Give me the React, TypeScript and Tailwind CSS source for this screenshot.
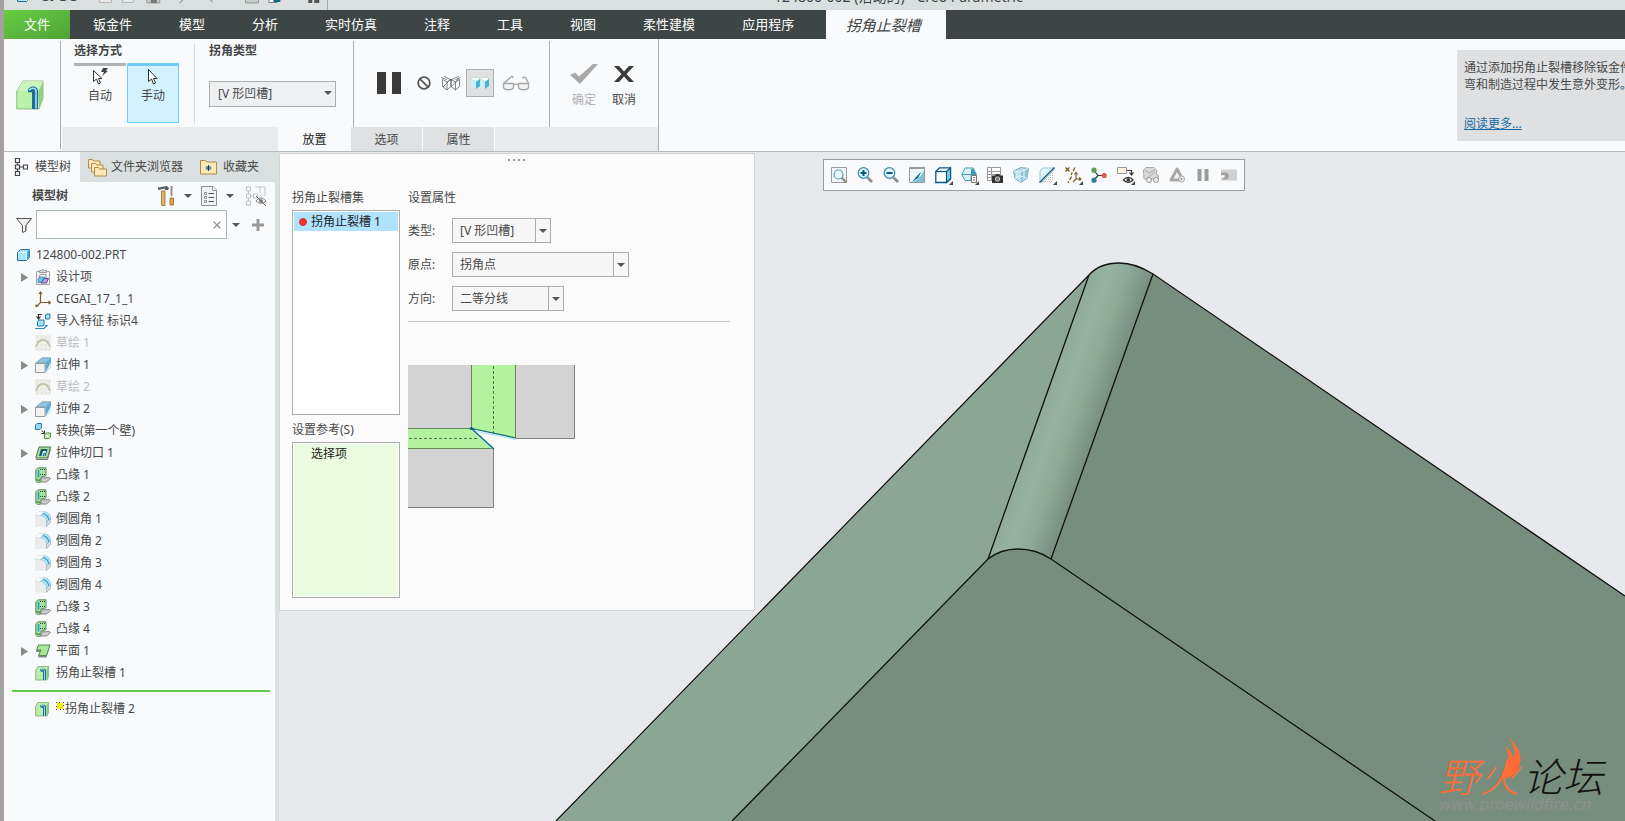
import { useState, type ReactNode } from "react";
import { Ban, X } from "lucide-react";

const menuItems = ["钣金件", "模型", "分析", "实时仿真", "注释", "工具", "视图", "柔性建模", "应用程序"];

type IconName =
  | "part"
  | "design"
  | "csys"
  | "import"
  | "sketch"
  | "extrude"
  | "convert"
  | "cut"
  | "flange"
  | "round"
  | "planar"
  | "relief";

type TreeItem = { label: string; icon: IconName; expandable?: boolean; muted?: boolean };

const treeItems: TreeItem[] = [
  { label: "设计项", icon: "design", expandable: true },
  { label: "CEGAI_17_1_1", icon: "csys" },
  { label: "导入特征 标识4", icon: "import" },
  { label: "草绘 1", icon: "sketch", muted: true },
  { label: "拉伸 1", icon: "extrude", expandable: true },
  { label: "草绘 2", icon: "sketch", muted: true },
  { label: "拉伸 2", icon: "extrude", expandable: true },
  { label: "转换(第一个壁)", icon: "convert" },
  { label: "拉伸切口 1", icon: "cut", expandable: true },
  { label: "凸缘 1", icon: "flange" },
  { label: "凸缘 2", icon: "flange" },
  { label: "倒圆角 1", icon: "round" },
  { label: "倒圆角 2", icon: "round" },
  { label: "倒圆角 3", icon: "round" },
  { label: "倒圆角 4", icon: "round" },
  { label: "凸缘 3", icon: "flange" },
  { label: "凸缘 4", icon: "flange" },
  { label: "平面 1", icon: "planar", expandable: true },
  { label: "拐角止裂槽 1", icon: "relief" },
];

const treeIcons: Record<IconName, ReactNode> = {
  part: (
    <>
      <path d="M1.5 5.500 4.500 2.500h9v8l-3 3h-9z" fill="#a8e6fb" stroke="#2b6f8f" />
      <path d="M10.500 5.500l3-3v8l-3 3z" fill="#38a8d8" />
      <path d="M2 5.500h8.500v7.500" fill="none" stroke="#e2f8ff" />
    </>
  ),
  design: (
    <>
      <path d="M1.500 2.500h13v13h-13z" fill="#f2f2f2" stroke="#a5a5a5" />
      <path d="M4.500 3.500v-2h2l1.500-1 1.500 1h2v2z" fill="#ddd" stroke="#999" />
      <path d="M5 5.500h6v4H4z" fill="#fff" stroke="#999" />
      <path d="M3 10l2-2h5v4l-2 1.500H3z" fill="#5fc3e8" stroke="#357f9f" strokeWidth=".7" />
      <path d="M6 14l3-4.500h4.500l-2 4.500z" fill="#b9a0e0" stroke="#69489c" />
    </>
  ),
  csys: (
    <g fill="none" stroke="#7a6030" strokeWidth="1.200">
      <path d="M5.500 2v9.500H15M5.500 11.500L1 16M4 3 5.500 1 7 3M13.500 10l2 1.500-2 1.500M1 13.500V16h2.500" />
    </g>
  ),
  import: (
    <>
      <path d="M7 1.500H3.500v4M1.500 3.500l2 2.500 2-2.500" fill="none" stroke="#333" strokeWidth="1.200" />
      <path d="M10.500 2l1-1H15v4l-1 1h-3.500z" fill="#9de0f8" stroke="#2a7ba0" />
      <path d="M2.500 8.500 4 7h5v5l-1 1H2.500z" fill="#9de0f8" stroke="#2a7ba0" />
      <path d="M0 15.500h9l3-3h-2" fill="none" stroke="#2a90bd" strokeWidth="1.200" />
    </>
  ),
  sketch: (
    <>
      <path d="M0 0h16v16H0z" fill="#eeeeea" />
      <path d="M2 2h13M2 6h13M2 10h13M2 14h13" stroke="#d3cbbb" strokeDasharray="1 3" />
      <path d="M1 12C4 2.500 12 2.500 15 12" fill="none" stroke="#c4c0a8" strokeWidth="1.600" />
      <path d="M2 7l4-2M10 5l4 2" stroke="#c4c0a8" />
    </>
  ),
  extrude: (
    <>
      <path d="M1 6 7 .8h9l-5.500 5.200z" fill="#8cc7e2" stroke="#6795a8" strokeWidth=".7" />
      <path d="M10.500 6 16 1v9l-5.500 5.500z" fill="#5fa9cc" />
      <path d="M10.500 15.500 16 10v-5z" fill="#d5f1fb" />
      <path d="M.5 6.500h9.500v9H.5z" fill="#f2f2f2" stroke="#9a9a9a" />
    </>
  ),
  convert: (
    <>
      <path d="M.5 2 2 .5h4.500V5L5 6.500H.5z" fill="#8fdaf6" stroke="#2a7ba0" />
      <path d="M6.500 7.500 9.500 10M9.500 7.500v3h-3" stroke="#333" fill="none" />
      <path d="M9.500 11.500 11.500 10h4v4l-1.500 1.500H9.500z" fill="#b9eba7" stroke="#4f8e43" />
      <path d="M11 12h2v2h-2z" fill="#fff" />
    </>
  ),
  cut: (
    <>
      <path d="M.8 13 4 2h11.500l-3 11z" fill="#a9df9e" stroke="#48764a" />
      <path d="M1 14.500h11.500L15.500 4" fill="none" stroke="#777" />
      <path d="M4 11 6 4h6.500l-2 7z" fill="#0f5779" />
      <path d="M6.500 11 8 6h3l-1.500 5z" fill="#e8f8ff" />
      <path d="M7.500 11 8.500 8H10l-.8 3z" fill="#1878a5" />
    </>
  ),
  flange: (
    <>
      <path d="M5 11l9-.5 1.500 1-4 3.500H4z" fill="#c9cccb" stroke="#888" />
      <path d="M.8 4C1 2 2 1.300 4 .8h7v8L6 10v4.500l-2.500 1c-2 0-2.700-1-2.700-2.500z" fill="#a7df9c" stroke="#5c8e5c" />
      <path d="M3.500 3v7.500" stroke="#22a0cc" strokeWidth="1.600" />
      <path d="M5 2.500h5.500M5 7.500h5.500" stroke="#245" strokeDasharray="1 1" />
      <path d="M1.500 12c1 2 3 1.500 4 .5" fill="none" stroke="#547a54" strokeWidth="1.200" />
    </>
  ),
  round: (
    <>
      <path d="M0 5h6c4 1 5 4 5 11H0z" fill="#ebebeb" />
      <path d="M0 4.500 4 .5h5L6 4.500z" fill="#fff" stroke="#c9d2d6" strokeWidth=".6" />
      <path d="M5.500 4.500 9.500.8c3.500.5 6 3 6.200 6.500L11.500 11C11 7 9 5 5.500 4.500z" fill="#aee4f8" stroke="#8fbfd4" strokeWidth=".7" />
      <path d="M11.500 11l4.300-3.500V11l-4.300 4.500z" fill="#d6dcde" stroke="#8caebc" strokeWidth=".7" />
      <path d="M8 2.500C11.500 3.500 13.500 6 13.800 9" fill="none" stroke="#3a9cc8" strokeWidth="1.200" />
    </>
  ),
  planar: (
    <>
      <path d="M3 14.500 5 9H1L3.500 2.500H15l-3.500 12z" fill="#898989" />
      <path d="M3.500 12.500 6 7H1.500L3.500 2H15l-3.500 10.500z" fill="#a9e89b" stroke="#568b51" />
    </>
  ),
  relief: (
    <>
      <path d="M.7 15V5L3 1.500h10.500v10L12 15z" fill="#b8edaa" stroke="#8fb88c" />
      <path d="M11.500 15V5l2-3.500v10z" fill="#88c97f" />
      <path d="M5 5.500C5 3 11 3 11 5.500V15H8V6.800H6z" fill="#1e6f98" />
      <path d="M6.300 5.200C7 4.300 9 4.300 9.500 5.500V15" fill="none" stroke="#8fd6f5" />
    </>
  ),
};

function TreeIcon({ name }: { name: IconName }) {
  return (
    <svg viewBox="0 0 16 16" className="h-4 w-4 shrink-0" aria-hidden="true">
      {treeIcons[name]}
    </svg>
  );
}

const lens = (
  <>
    <path d="M10.500 10.500 15 15" stroke="#8b8b8b" strokeWidth="2.600" />
    <circle cx="6.500" cy="6" r="5.300" fill="#dff4fc" stroke="#3d8bab" strokeWidth="1.200" />
  </>
);

const corner = <path d="M18 14v4h-4z" fill="#444" />;

const viewTools: { label: string; icon: ReactNode }[] = [
  {
    label: "重新调整",
    icon: (
      <>
        <path d="M.5.5h15v15H.5z" fill="#f4f8fa" stroke="#9a9a9a" />
        <path d="M10 10l5.500 5.500" stroke="#8b8b8b" strokeWidth="2.400" />
        <circle cx="7.500" cy="7.500" r="4.500" fill="#eefaff" stroke="#4f9ab8" strokeWidth="1.200" />
      </>
    ),
  },
  { label: "放大", icon: <>{lens}<path d="M3.500 6h6M6.500 3v6" stroke="#075a80" strokeWidth="2" /></> },
  { label: "缩小", icon: <>{lens}<path d="M3.500 6h6" stroke="#075a80" strokeWidth="2" /></> },
  {
    label: "重画",
    icon: (
      <>
        <path d="M.5.5h15v15H.5z" fill="#eef7fa" stroke="#999" />
        <path d="M15 3v12H3C9 13 12 9 15 3z" fill="#7cc2d9" />
        <path d="M3 15 7 10l5.500-5.500L9 11z" fill="#11658b" />
        <path d="M.5 1h15" stroke="#999" strokeWidth="2" />
      </>
    ),
  },
  {
    label: "显示样式",
    icon: (
      <>
        <path d="M.8 4.500 4.500.8h11v11l-4 3.700H.8z" fill="#fff" stroke="#075a80" strokeWidth="1.300" />
        <path d="M11.500 4.500l4-3.700v11l-4 3.700z" fill="#86cbe6" stroke="#075a80" strokeWidth="1.200" />
        <path d="M.8 4.500h10.700" stroke="#075a80" strokeWidth="1.300" />
        {corner}
      </>
    ),
  },
  {
    label: "已保存方向",
    icon: (
      <>
        <path d="M.8 7.500 4 1h8l3.500 6.500-3.500 6H4z" fill="#d8f3fc" stroke="#4f9ab8" />
        <path d="M10 8V3l2-2 3.500 7z" fill="#3d99bd" />
        <path d="M1 7.500h9v6" stroke="#4f9ab8" fill="none" />
        <path d="M10.500 8.500h5v7h-5z" fill="#fff" stroke="#777" />
        <path d="M12 10.500h2M12 13h2" stroke="#777" />
        {corner}
      </>
    ),
  },
  {
    label: "视图管理器",
    icon: (
      <>
        <path d="M.5.5h13v13H.5zM.5 4.500h13M.5 7.500h13M.5 10.500h13M4.500 1v12" fill="#fff" stroke="#999" />
        <path d="M5 8.500h3l1-1.500h3l1 1.500h3V16H5z" fill="#333" />
        <circle cx="10.500" cy="12" r="2.200" fill="#777" stroke="#ccc" />
      </>
    ),
  },
  {
    label: "透视图",
    icon: (
      <>
        <path d="M.5 4 8 .5l7.500 1-1.500 10-6 4-6-4z" fill="#b9dcea" stroke="#79a9bc" />
        <path d="M7 5 15.500 1.500 14 11.500l-7 4z" fill="#8dc4da" />
        <path d="M.5 4 7 5l8-3.500M7 5v10M11 3.500v10M4 4.500v8M2 11l5-2 7 2" fill="none" stroke="#e6f5fa" />
      </>
    ),
  },
  {
    label: "截面",
    icon: (
      <>
        <path d="M1 4 4 1h11v2L3 15H1z" fill="#e0f5fc" stroke="#9cc8d8" />
        <path d="M.5 15.500 15.500.5" stroke="#12597a" strokeWidth="1.200" />
        <path d="M4 14.500h10M7 12.500h7M9 10.500h5M11 8.500h4M13 6.500h2" stroke="#bbb" strokeDasharray="1 1" />
        {corner}
      </>
    ),
  },
  {
    label: "基准显示",
    icon: (
      <>
        <path d="M.5.500l4 4m0-4-4 4" stroke="#7a5c22" strokeWidth="1.300" />
        <path d="M10 .5 6 8M6.500 9.500 3 16" fill="none" stroke="#7a5c22" strokeWidth="1.300" strokeDasharray="4 1.500" />
        <path d="M11 6v6h4.500M11 12l-3 3M9.500 7.500 11 5.500l1.500 2M14 10.500l2 1.500-2 1.500" fill="none" stroke="#7a5c22" strokeWidth="1.100" />
        {corner}
      </>
    ),
  },
  {
    label: "注释显示",
    icon: (
      <>
        <path d="M3 3.500 7 8.500 3 13M7 8.500h6" fill="none" stroke="#333" strokeWidth="1.200" />
        <circle cx="3" cy="3.200" r="2.600" fill="#5aa05a" />
        <circle cx="13.200" cy="8.500" r="2.600" fill="#dd5a50" />
        <circle cx="3" cy="13.200" r="2.600" fill="#2c7fa6" />
      </>
    ),
  },
  {
    label: "旋转中心",
    icon: (
      <>
        <path d="M.5.5h9v6h-9z" fill="#fff5dc" stroke="#999" />
        <path d="M10 3.500h4.500v4M12.500 5.500l2 2.500 2-2.500" fill="none" stroke="#333" strokeWidth="1.200" />
        <path d="M6.500 13c2.500-3.500 7-3.500 9.500 0-2.500 3-7 3-9.500 0z" fill="#fff" stroke="#333" strokeWidth="1.300" />
        <circle cx="11.200" cy="12.800" r="1.800" fill="#333" />
        {corner}
      </>
    ),
  },
  {
    label: "外观",
    icon: (
      <>
        <path d="M.5 3 3 .5h8l3 3-1 3 2.500 2V12H1z" fill="#d9d9d9" stroke="#aaa" />
        <path d="M2 3l4 3 6-3M4 11l8-6" stroke="#aaa" fill="none" />
        <circle cx="6" cy="13" r="2.500" fill="#eee" stroke="#999" />
        <circle cx="13" cy="13" r="2.500" fill="#eee" stroke="#999" />
      </>
    ),
  },
  {
    label: "仿真",
    icon: (
      <>
        <path d="M8 2 14 13H2z" fill="#f3f3f3" stroke="#a8a8a8" strokeWidth="3" strokeLinejoin="round" />
        <circle cx="12.500" cy="12" r="3" fill="#eee" stroke="#aaa" />
        <path d="M11.700 10.500v3l2-1.500z" fill="#888" />
      </>
    ),
  },
  { label: "暂停", icon: <path d="M2.500 2h4v12h-4zM9.500 2h4v12h-4z" fill="#9b9b9b" /> },
  {
    label: "停止",
    icon: (
      <>
        <path d="M0 2.500h16v11H0z" fill="#cfcfcf" />
        <path d="M0 5.500h4c5 0 5 7 0 7H2v-2h2V8H0z" fill="#a0a0a0" />
        <path d="M0 8.500h3v2H0z" fill="#f8fafc" />
      </>
    ),
  },
];

function Caret() {
  return (
    <svg viewBox="0 0 8 4" className="h-1 w-2 shrink-0" aria-hidden="true">
      <path d="M0 0h8L4 4z" fill="#555" />
    </svg>
  );
}

function Field({ id, label, value, width }: { id: string; label: string; value: string; width: string }) {
  return (
    <div className="flex h-[25px] items-center">
      <label htmlFor={id} className="w-11">
        {label}
      </label>
      <div className={`relative h-full ${width}`}>
        <select
          id={id}
          className="h-full w-full appearance-none border border-[#adadad] bg-[#f7f7f7] pl-[7px] text-[12px] leading-4 outline-none"
        >
          <option>{value}</option>
        </select>
        <span className="pointer-events-none absolute inset-y-0 right-0 flex w-4 items-center border-l border-[#adadad] pl-[3px]">
          <Caret />
        </span>
      </div>
    </div>
  );
}

function TitleBar() {
  return (
    <header className="flex h-[10px] items-end overflow-hidden bg-[#dae0df] text-[#444]">
      <div className="flex h-7 w-[324px] shrink-0 items-end border-r border-[#a3a9a9] pb-1.5">
        <svg viewBox="0 0 16 16" className="ml-3 h-4 w-4 shrink-0" aria-hidden="true">
          {treeIcons.part}
        </svg>
        <span className="ml-2 w-[58px] text-[18px] leading-5 font-bold">creo</span>
        <svg viewBox="0 0 230 16" className="h-4 w-[230px]" aria-hidden="true">
          <path d="M1.500 1.500h12v13h-12zM24 14.500l4-8h11l-4 8z" fill="#e8e8e8" stroke="#b5b5b5" />
          <path d="M49 2h13v13H49zM148 2h13v13h-13z" fill="#c5c9c8" stroke="#999" />
          <path d="M53 10h6v5h-6z" fill="#777" />
          <path d="M82 15l4-4M115 14l-4-4" stroke="#777" />
          <path d="M171.500 10.500h8v4h-8z" fill="#fff" stroke="#777" />
          <path d="M176 8h7v6h-7z" fill="#15658c" />
          <path d="M211 12h4v3h-4zM217 12h5v3h-5z" fill="#555" />
        </svg>
      </div>
      <p className="mb-1 ml-[446px] text-[14px] leading-[18px] whitespace-nowrap">
        124800-002 (活动的) - Creo Parametric
      </p>
    </header>
  );
}

function MenuBar() {
  return (
    <nav className="flex h-[29px] bg-[#3d4545] text-[13px] leading-4 text-white">
      <button type="button" className="w-[66px] bg-linear-to-br from-[#67cd43] to-[#4fa336] pb-0.5">
        文件
      </button>
      <div className="flex gap-[47px] pr-8 pb-0.5 pl-[23px]">
        {menuItems.map((item) => (
          <button key={item} type="button">
            {item}
          </button>
        ))}
      </div>
      <button type="button" className="w-[120px] bg-[#f8fafc] pr-1.5 text-[15px] text-[#444] italic">
        拐角止裂槽
      </button>
    </nav>
  );
}

function Ribbon() {
  const [mode, setMode] = useState("手动");
  const [tab, setTab] = useState("放置");

  return (
    <section className="flex h-[113px] border-b border-[#b3bcbc] bg-[#f8fafc]">
      <div className="my-0.5 flex w-[57px] items-center border-r border-[#aaafb0] pl-3">
        <svg viewBox="0 0 28 30" className="h-[30px] w-7" aria-hidden="true">
          <path d="M.8 29V11L7 1h20v17l-4 11z" fill="#b9f3a9" stroke="#8fba8b" />
          <path d="M1 11 7 1h20l-5 10z" fill="#c9f4c0" />
          <path d="M22 12 27 2v16l-4 11z" fill="#8fce8b" />
          <path d="M12 11C12 5 22 5 22 11v18h-6V12z" fill="#1c6c94" />
          <path d="M13.500 10.500c1-3 6-3 6.500 0v18" fill="none" stroke="#a3e2fb" strokeWidth="1.600" />
          <path d="M12 11.500h4.500v-2" fill="none" stroke="#1c6c94" strokeWidth="1.400" />
        </svg>
      </div>

      <div className="mr-px flex w-[598px] flex-col border-r border-[#aaafb0]">
        <div className="flex h-[88px] pt-0.5">
          <div className="my-[3px] w-[134px] border-r border-[#d5d8da] pl-[13px]">
            <h2 className="h-[19px] text-[12px] leading-[13px] font-bold text-[#444]">选择方式</h2>
            <div className="flex gap-px">
              <button
                type="button"
                onClick={() => setMode("自动")}
                className="flex h-[60px] w-[52px] flex-col items-center border-t-3 border-[#b0b2b3] pt-0.5"
              >
                <svg viewBox="0 0 18 17" className="h-[17px] w-[18px]" aria-hidden="true">
                  <path d="M2.500 2.500v11l3-2.500 2 5 2-1-2-4.500h3.500z" fill="#fff" stroke="#333" />
                  <path d="M12 0h5l-2 3h2l-6 5 2-4h-3z" fill="#444" />
                </svg>
                <span className="mt-[3px] text-[12px] leading-4">自动</span>
              </button>
              <button
                type="button"
                onClick={() => setMode("手动")}
                aria-pressed={mode === "手动"}
                className="flex h-[60px] w-[52px] flex-col items-center border border-t-3 border-[#73cdfb] bg-[#d2f2ff] pt-0.5"
              >
                <svg viewBox="0 0 16 17" className="h-[17px] w-4" aria-hidden="true">
                  <path d="M3.500 1.500v12l3-2.500 2 5 2-1-2-4.500h3.500z" fill="#fff" stroke="#333" />
                </svg>
                <span className="mt-[3px] text-[12px] leading-4">手动</span>
              </button>
            </div>
          </div>

          <div className="w-[159px] border-r border-[#aaafb0] pt-[3px] pl-[14px]">
            <label htmlFor="corner-type" className="block h-9 text-[12px] leading-[13px] font-bold text-[#444]">
              拐角类型
            </label>
            <div className="relative h-[26px] w-[127px]">
              <select
                id="corner-type"
                className="h-full w-full appearance-none border border-[#adadad] bg-[#eef1f2] pl-2 text-[12px] leading-4 outline-none"
              >
                <option>[V 形凹槽]</option>
              </select>
              <span className="pointer-events-none absolute inset-y-0 right-1 flex items-center">
                <Caret />
              </span>
            </div>
          </div>

          <div className="flex w-[196px] items-center border-r border-[#aaafb0] pb-0.5 pl-[23px]">
            <button type="button" aria-label="暂停" className="flex gap-1.5">
              <span className="h-[22px] w-[9px] bg-[#3a3a3a]" />
              <span className="h-[22px] w-[9px] bg-[#3a3a3a]" />
            </button>
            <button type="button" aria-label="无预览" className="ml-4">
              <Ban size={14} strokeWidth={3} className="text-[#555]" />
            </button>
            <button type="button" aria-label="分离" className="ml-2.5">
              <svg viewBox="0 0 20 16" className="h-4 w-5" aria-hidden="true">
                <path
                  d="M1.500 4.500 6 7l4-2.500v7L6 15l-4.500-3.500zM6 7v8M10 4.500 14.500 7l4-2.500v7l-4 3.500-4.500-3.500zM14.500 7v8M0 2.500l6 2M3 1l7 4M18 1l-8 4M19.500 2.500l-5 2M2 12l8-8M10 12l8-9"
                  fill="none"
                  stroke="#555"
                  strokeWidth=".7"
                />
              </svg>
            </button>
            <button
              type="button"
              aria-label="连接"
              className="ml-[5px] flex h-7 w-7 items-center justify-center border border-[#adadad] bg-[#e0e1e3]"
            >
              <svg viewBox="0 0 18 14" className="h-[14px] w-[18px]" aria-hidden="true">
                <path d="M0 3l5 2.500V13L0 9.500zM9 3l5 2.500V13L9 9.500z" fill="#c9effc" />
                <path d="M5 5.500 9 2.500v7.500l-4 3zM14 5.500l4-3v7.500l-4 3z" fill="#45b1dd" />
                <path d="M0 3 2 1.500h5L9 3 5 5.500zM9 3l2-1.500h5L18 3l-4 2.500z" fill="#fff" stroke="#8ca" strokeWidth=".4" />
              </svg>
            </button>
            <button type="button" aria-label="预览" className="ml-2">
              <svg viewBox="0 0 28 16" className="h-4 w-7" aria-hidden="true">
                <path
                  d="M1.500 8.500h10v4c-1 3-9 3-10 0zM16.500 8.500h10v4c-1 3-9 3-10 0zM11.500 10c1.500-1 3.500-1 5 0M1.500 8.500 9 2c1-1 2-.5 2 1M26.500 8.500 24 3c-1-1.500-3-1-3.500.5"
                  fill="#eee"
                  fillOpacity=".6"
                  stroke="#a5a5a5"
                  strokeWidth="1.300"
                />
              </svg>
            </button>
          </div>

          <div className="flex items-start gap-3 pt-[22px] pl-5 text-[12px] leading-4">
            <button type="button" className="flex w-7 flex-col items-center text-[#b0b0b0]">
              <svg viewBox="0 0 28 22" className="h-[22px] w-7" aria-hidden="true">
                <path d="M0 12l5-2.500 4 4L23 1h5L10 21z" fill="#a9a9a9" />
              </svg>
              <span className="mt-[7px] whitespace-nowrap">确定</span>
            </button>
            <button type="button" className="flex w-7 flex-col items-center">
              <svg viewBox="0 0 20 22" className="h-[22px] w-5" aria-hidden="true">
                <path d="M0 3h5l5 5.500L15 3h5l-7.500 8 7.500 8h-5l-5-5.500L5 19H0l7.500-8z" fill="#3a3a3a" />
              </svg>
              <span className="mt-[7px] whitespace-nowrap">取消</span>
            </button>
          </div>
        </div>

        <div className="ml-px flex h-6 gap-px bg-[#f8fafc] text-[12px] leading-4" role="tablist">
          <span className="w-[216px] bg-[#e9ebec]" />
          {["放置", "选项", "属性"].map((name) => (
            <button
              key={name}
              type="button"
              role="tab"
              aria-selected={tab === name}
              onClick={() => setTab(name)}
              className={`w-[71px] pt-0.5 ${tab === name ? "bg-[#f8fafc] text-[#222]" : "bg-[#dfe1e3]"}`}
            >
              {name}
            </button>
          ))}
          <span className="flex-1 bg-[#e9ebec]" />
        </div>
      </div>

      <aside className="mt-[11px] ml-auto h-[91px] w-[168px] overflow-hidden bg-[#dfe0e2] pt-[9px] pl-[7px] text-[12px] leading-[17px] whitespace-nowrap">
        <p>
          通过添加拐角止裂槽移除钣金件
          <br />
          弯和制造过程中发生意外变形。
        </p>
        <a href="#help" className="mt-[22px] block text-[#1769a6] underline">
          阅读更多...
        </a>
      </aside>
    </section>
  );
}

function ModelTree() {
  return (
    <aside className="flex w-[275px] shrink-0 flex-col border-r-4 border-[#dae0df] bg-[#f8fafc] text-[12px] leading-4">
      <div className="flex h-[30px] bg-[#dae0df]" role="tablist">
        <button type="button" role="tab" aria-selected="true" className="flex w-19 items-center bg-[#f8fafc] pl-2.5">
          <svg viewBox="0 0 14 18" className="mr-[7px] h-[18px] w-[14px]" aria-hidden="true">
            <path
              d="M1.500.5h4v4h-4zM1.500 7h4v4h-4zM1.500 13.500h4v4h-4zM9.500 7h4v4h-4zM3.500 4.500V7M3.500 11v2.500M5.500 9h4"
              fill="none"
              stroke="#444"
              strokeWidth="1.200"
            />
          </svg>
          模型树
        </button>
        <button type="button" role="tab" aria-selected="false" className="flex items-center pl-2">
          <svg viewBox="0 0 19 19" className="mr-1 h-[19px] w-[19px]" aria-hidden="true">
            <g fill="#ffe9b8" stroke="#b08a4a">
              <path d="M.5 10V1.500h4L5.500 3H12v7z" />
              <path d="M3.500 14V5.500h4L8.500 7H15v7z" />
              <path d="M6.500 18V9.500h4l1 1.500h7v7z" />
            </g>
          </svg>
          文件夹浏览器
        </button>
        <button type="button" role="tab" aria-selected="false" className="flex items-center pl-[17px]">
          <svg viewBox="0 0 17 16" className="mr-1.5 h-4 w-[17px]" aria-hidden="true">
            <path d="M.5 15V1.500h5L7 3h9.500v12z" fill="#ffe9b8" stroke="#b08a4a" />
            <path d="M8.500 6v6M5.500 9h6M6.500 7l4 4M10.500 7l-4 4" stroke="#15557a" />
          </svg>
          收藏夹
        </button>
      </div>

      <div className="flex h-7 items-center pr-2 pl-7">
        <h2 className="font-bold">模型树</h2>
        <button type="button" aria-label="设置" className="ml-auto flex items-center gap-[9px]">
          <svg viewBox="0 0 17 20" className="h-5 w-[17px]" aria-hidden="true">
            <path d="M0 4V1.500L9 0l2 2-1 2H7V2.500z" fill="#555b66" />
            <path d="M3.500 5h3.500v14.500H3.500z" fill="#e4b468" stroke="#8c6a35" strokeWidth=".8" />
            <path d="M13.500 0v10" stroke="#888" strokeWidth="1.800" />
            <path d="M12 12h3.500v7H12z" fill="#e4a848" stroke="#8c6a35" strokeWidth=".8" />
          </svg>
          <Caret />
        </button>
        <button type="button" aria-label="显示" className="ml-[9px] flex items-center gap-[9px]">
          <svg viewBox="0 0 16 20" className="h-5 w-4" aria-hidden="true">
            <path d="M.5.5H12L15.500 4v15.500H.5z" fill="#eef4f7" stroke="#8a8f92" />
            <path d="M11.500.5v4h4" fill="#fff" stroke="#8a8f92" />
            <path d="M7.500 7.500H13M7.500 11.500H13M7.500 15.500H13" stroke="#555" />
            <path d="M3.500 6.500h2v2h-2zM3.500 10.500h2v2h-2zM3.500 14.500h2v2h-2z" fill="#fff" stroke="#777" strokeWidth=".8" />
          </svg>
          <Caret />
        </button>
        <button type="button" aria-label="隐藏" className="ml-3">
          <svg viewBox="0 0 21 20" className="h-5 w-[21px]" aria-hidden="true">
            <path
              d="M.5 1h4v4h-4zM.5 8h4v4h-4zM.5 15h4v4h-4zM7.500 8h4v4h-4zM4.500 10h3M2.500 5v3M2.500 12v3M9 1h10v9M14 1v6"
              fill="none"
              stroke="#bfc1c2"
            />
            <path d="M10 15c3-4 7-4 10 0-3 3-7 3-10 0z" fill="#eee" stroke="#888" />
            <circle cx="15" cy="15" r="2" fill="#888" />
            <path d="M10 10l10 10" stroke="#666" />
          </svg>
        </button>
      </div>

      <div className="flex h-[29px] items-center pl-3">
        <svg viewBox="0 0 16 16" className="mr-1 h-4 w-4" aria-hidden="true">
          <path d="M.5 1.500h15L10 8.500V14l-3.500 1.500v-7z" fill="#f2f2f2" stroke="#555" />
          <path d="M9 9l5-7h1.500L10 8.500V14l-1 .5z" fill="#777" />
        </svg>
        <div className="relative h-full w-[191px]">
          <input
            type="text"
            aria-label="搜索模型树"
            className="h-full w-full border border-[#a9b5b5] bg-white pr-6 pl-1 outline-none"
          />
          <button type="button" aria-label="清除" className="absolute inset-y-0 right-1">
            <X size={12} strokeWidth={3} className="text-[#999]" />
          </button>
        </div>
        <button type="button" aria-label="搜索选项" className="ml-[5px]">
          <Caret />
        </button>
        <button type="button" aria-label="添加" className="ml-3">
          <svg viewBox="0 0 12 12" className="h-3 w-3" aria-hidden="true">
            <path d="M4.500 0h3v4.500H12v3H7.500V12h-3V7.500H0v-3h4.500z" fill="#999" />
          </svg>
        </button>
      </div>

      <div className="mt-[5px] flex h-[22px] items-center gap-1 pl-3">
        <TreeIcon name="part" />
        124800-002.PRT
      </div>
      <ul>
        {treeItems.map((item) => (
          <li key={item.label} className="flex h-[22px] items-center pl-[17px]">
            <span className="w-[14px]">
              {item.expandable && (
                <svg viewBox="0 0 7 9" className="h-[9px] w-[7px]" aria-hidden="true">
                  <path d="M0 0l7 4.500L0 9z" fill="#8a8a8a" />
                </svg>
              )}
            </span>
            <TreeIcon name={item.icon} />
            <span className={`ml-[5px] ${item.muted ? "text-[#bcbcbc]" : ""}`}>{item.label}</span>
          </li>
        ))}
      </ul>
      <div className="mt-1.5 mr-[5px] mb-1.5 ml-2 h-0.5 bg-[#62cb45]" />
      <div className="flex h-[22px] items-center pl-[31px]">
        <TreeIcon name="relief" />
        <svg viewBox="0 0 8 8" shapeRendering="crispEdges" className="mb-1.5 ml-[5px] h-2 w-2" aria-hidden="true">
          <path d="M0 0h1v1H0zM7 0h1v1H7zM0 7h1v1H0zM7 7h1v1H7zM3 0h1v1H3zM0 4h1v1H0zM7 3h1v1H7zM4 7h1v1H4z" fill="#444" />
          <path d="M1 1h6v6H1z" fill="#f4ea00" />
        </svg>
        <span className="ml-px">拐角止裂槽 2</span>
      </div>
    </aside>
  );
}

function ReliefDiagram() {
  return (
    <svg viewBox="0 0 167 144" className="mt-[43px] h-36 w-[167px]" role="img" aria-label="V 形凹槽">
      <path d="M0 0h64v64H0zM108 0h59v74h-59zM0 84h86v59H0z" fill="#d4d4d4" />
      <path d="M64 0h44v73L64 64zM0 64h64l22 20H0z" fill="#b3f39f" />
      <path d="M63.500 0v64M107.500 0v73M0 63.500h64M0 83.500h86" fill="none" stroke="#64885a" />
      <path d="M85.500 1v68M1 73.500h70" fill="none" stroke="#4f7545" strokeDasharray="3 2" />
      <path d="M166.500 0v73.500H108M85.500 84v58.500H0" fill="none" stroke="#808080" />
      <path d="M108 74.500 64 65.500 84 83.500" fill="none" stroke="#a8e2f7" />
      <path d="M108 73 63.500 63.500 86 84" fill="none" stroke="#0f6378" strokeWidth="1.200" />
      <circle cx="63.500" cy="63.500" r="1.600" fill="#075a80" />
    </svg>
  );
}

function PlacementPanel() {
  return (
    <section className="relative mt-px w-[476px] shrink-0 self-start border border-[#d0d5d5] bg-[#fbfbfb] pb-3 pl-3 text-[12px] leading-4">
      <div className="flex h-[33px] justify-center gap-[3px] pt-[5px] pr-[14px]">
        <i className="h-0.5 w-0.5 bg-[#999]" />
        <i className="h-0.5 w-0.5 bg-[#999]" />
        <i className="h-0.5 w-0.5 bg-[#999]" />
        <i className="h-0.5 w-0.5 bg-[#999]" />
      </div>
      <div className="flex gap-2">
        <div className="w-[108px]">
          <h3 className="h-[23px] leading-[22px]">拐角止裂槽集</h3>
          <div className="h-[205px] border border-[#adadad] bg-white p-px">
            <button type="button" className="flex h-[19px] w-full items-center gap-1 bg-[#b0e3ff] pl-[5px] text-[#222]">
              <span className="h-2 w-2 rounded-full border border-[#c33] bg-[#ff2d2d]" />
              拐角止裂槽 1
            </button>
          </div>
          <h3 className="h-[27px] leading-[29px]">设置参考(S)</h3>
          <div className="h-[156px] border border-[#adadad] bg-white p-px">
            <div className="h-full bg-[#eafbdf] pt-0.5 pl-[17px] text-[#222]">选择项</div>
          </div>
        </div>
        <div className="w-[322px]">
          <h3 className="h-[31px] leading-[22px]">设置属性</h3>
          <div className="flex flex-col gap-[9px] border-b border-[#c6c6c6] pb-2.5">
            <Field id="type" label="类型:" value="[V 形凹槽]" width="w-[99px]" />
            <Field id="origin" label="原点:" value="拐角点" width="w-[177px]" />
            <Field id="direction" label="方向:" value="二等分线" width="w-[112px]" />
          </div>
          <ReliefDiagram />
        </div>
      </div>
    </section>
  );
}

function PartModel() {
  return (
    <svg
      viewBox="279 152 1346 669"
      preserveAspectRatio="xMinYMin slice"
      className="absolute inset-0 h-full w-full"
      aria-hidden="true"
    >
      <defs>
        <linearGradient id="bend" gradientUnits="userSpaceOnUse" x1="1089" y1="275" x2="1145" y2="295">
          <stop offset="0" stopColor="#90ab9a" />
          <stop offset=".3" stopColor="#97b2a1" />
          <stop offset=".6" stopColor="#8ea997" />
          <stop offset="1" stopColor="#788f7f" />
        </linearGradient>
      </defs>
      <path d="M1090 275 557 821h176l256-262z" fill="#8ba694" />
      <path d="M1152 274l473 322v225H732l256-262 63 0z" fill="#778e7e" />
      <path d="M988 559c10-8 20-10 30-10 12 0 24 4 33 10z" fill="#778e7e" />
      <path
        d="M1089 275c8-9 18-12 30-12 12 0 23 4 34 11l-102 285c-9-6-21-10-33-10-10 0-20 2-30 10z"
        fill="url(#bend)"
      />
      <g fill="none" stroke="#111" strokeWidth="1.300">
        <path d="M556 821 1089 275c8-9 18-12 30-12 12 0 23 4 34 11l472 322" />
        <path d="M732 821 988 559c10-8 20-10 30-10 12 0 24 4 33 10l384 262" />
        <path d="M1089 275 988 559M1153 274 1051 559" />
      </g>
    </svg>
  );
}

function Watermark() {
  return (
    <div className="absolute right-4 bottom-2 flex w-[170px] flex-col">
      <p className="relative flex text-[40px] leading-10 font-light whitespace-nowrap italic">
        <span className="text-[#ff6b35]">野火</span>
        <span className="ml-1 text-[#111]">论坛</span>
        <svg viewBox="0 0 18 42" className="absolute -top-5 left-16 h-[42px] w-[18px]" aria-hidden="true">
          <path d="M5 0c10 8 14 18 12 26-2 9-8 14-15 16-3-3 0-7 2-12C7 22 5 14 2 9c5 4 8 8 9 13 2-8-1-16-6-22z" fill="#ff6b35" />
        </svg>
      </p>
      <a href="#forum" className="font-['DejaVu_Sans'] text-[15px] leading-4 whitespace-nowrap text-[#8f9092] italic">
        www.proewildfire.cn
      </a>
    </div>
  );
}

export default function App() {
  return (
    <div className="flex min-h-screen flex-col overflow-hidden border-l-4 border-[#a5a1a1] bg-[#e8e9ed] font-['Noto_Sans','Noto_Sans_CJK_SC',sans-serif] text-[#484848]">
      <TitleBar />
      <MenuBar />
      <Ribbon />
      <div className="flex flex-1">
        <ModelTree />
        <main className="relative flex min-w-0 flex-1 items-start overflow-hidden">
          <PartModel />
          <PlacementPanel />
          <div className="relative mt-[7px] ml-[68px] flex h-8 shrink-0 border border-[#9c9ea2] bg-[#f8fafc] px-0.5" role="toolbar">
            {viewTools.map((tool) => (
              <button
                key={tool.label}
                type="button"
                aria-label={tool.label}
                className="flex w-[26px] items-center justify-center"
              >
                <svg viewBox="0 0 16 16" className="h-4 w-4 overflow-visible" aria-hidden="true">
                  {tool.icon}
                </svg>
              </button>
            ))}
          </div>
          <Watermark />
        </main>
      </div>
    </div>
  );
}
